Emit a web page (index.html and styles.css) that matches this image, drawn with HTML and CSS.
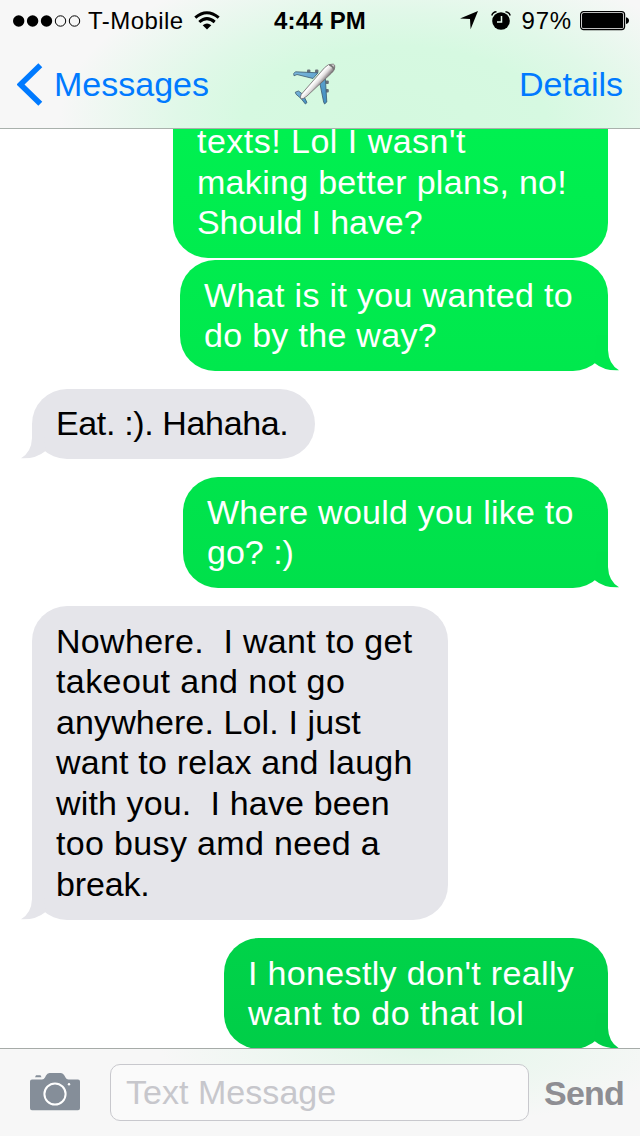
FILE: index.html
```html
<!DOCTYPE html>
<html lang="en">
<head>
<meta charset="utf-8">
<title>Messages</title>
<link rel="stylesheet" href="styles.css">
</head>
<body>
<div class="screen">
  <header class="top">
    <div class="status">
      <div class="status-left">
        <svg class="signal" width="68" height="12" viewBox="0 0 68 12"><g fill="#000"><circle cx="5.7" cy="6" r="5.7"/><circle cx="19.6" cy="6" r="5.7"/><circle cx="33.5" cy="6" r="5.7"/></g><g fill="none" stroke="#000"><circle cx="47.5" cy="6" r="5.2"/><circle cx="61.5" cy="6" r="5.2"/></g></svg>
        <span class="carrier">T-Mobile</span>
        <svg class="wifi" width="26" height="19" viewBox="0 0 26 19"><g fill="none" stroke="#000" stroke-width="3"><path d="M1.3 6.7Q12.8-3.3 24.7 6.7"/><path d="M5.3 11Q12.8 4.3 20.7 11"/></g><path d="M8.7 14.2Q13 10.6 17.3 14.2L13 18.5Z"/></svg>
      </div>
      <span class="clock">4:44 PM</span>
      <div class="status-right">
        <svg class="location" width="18" height="19" viewBox="0 0 18 19"><path d="M18 0L10.6 18.3L10 8L0 7.5Z"/></svg>
        <svg class="alarm" width="20" height="19" viewBox="0 0 20 19"><circle cx="10" cy="10" r="8.8"/><path d="M.8 4.5Q1.8 1 5.5.8M14.5.8Q18.2 1 19.2 4.5" fill="none" stroke="#000" stroke-width="1.5"/><path d="M10.5 5V11H6" fill="none" stroke="#e7f9ed" stroke-width="1.5"/></svg>
        <span class="percent">97%</span>
        <svg class="battery" width="50" height="20" viewBox="0 0 50 20"><rect x=".6" y=".6" width="44" height="18" rx="3" fill="#fff" stroke="#000" stroke-width="1.2"/><rect x="2" y="2" width="41.2" height="15.2" rx="1.5"/><path d="M46 6.2Q49 6.8 49 9.6T46 13Z"/></svg>
      </div>
    </div>
    <nav class="nav">
      <a class="back"><svg width="26" height="43" viewBox="0 0 26 43"><path d="M23.3 2.2L3.5 21.5L23.3 40.8" fill="none" stroke="#007aff" stroke-width="5.6"/></svg><span>Messages</span></a>
      <svg class="plane" width="44" height="44" viewBox="0 0 44 44">
        <defs><linearGradient id="body" gradientUnits="userSpaceOnUse" x1="20" y1="15" x2="28" y2="22"><stop offset="0" stop-color="#d5d2d3"/><stop offset=".3" stop-color="#fff"/><stop offset=".6" stop-color="#e0dcdd"/><stop offset="1" stop-color="#777073"/></linearGradient><linearGradient id="wing" x1="0" y1="0" x2="1" y2="1"><stop offset="0" stop-color="#7cb8dc"/><stop offset="1" stop-color="#3f8cc0"/></linearGradient></defs>
        <g fill="#687079"><rect x="14" y="6.4" width="3.4" height="3.5" rx="1"/><rect x="22" y="6.4" width="3.4" height="3.5" rx="1"/><rect x="32.5" y="17.6" width="3.3" height="3.5" rx="1"/><rect x="32.5" y="26" width="3.3" height="3.5" rx="1"/></g>
        <g stroke="#3c5a70" stroke-width=".8"><path fill="url(#wing)" d="M.7 10.6L2.4 8.8L25 9.8L20 15.5L4 11.5L1 12.8ZM27 21L32.4 16L33.8 39L31.6 41L30.6 39Z"/><path fill="url(#wing)" d="M2.3 29.2L5.5 28L10 31.5L14 39.5L12.4 41L8 35.5L3 31.2Z"/></g>
        <path fill="url(#body)" stroke="#706b6d" stroke-width=".8" d="M8 35.8Q6.8 34.5 8.2 31.4L31.5 4.7Q35 .5 40.3 1.1Q42.4 1.7 41.7 5Q41 8 38.6 10L14 33Q10 36.5 8 35.8Z"/>
        <path d="M36.2 1.8Q40 3 41 6.7" fill="none" stroke="#777" stroke-width="1.5"/>
      </svg>
      <a class="details">Details</a>
    </nav>
  </header>
  <main class="thread">
    <div class="bubble sent first"><span class="l1">texts! Lol I wasn't</span><span class="l2">making better plans, no!</span><span class="l3">Should I have?</span></div>
    <div class="bubble sent second"><span class="l4">What is it you wanted to</span><span class="l5">do by the way?</span><svg class="tail" viewBox="0 0 42 36" width="42" height="36"><path d="M20 0H31V15Q31.5 29 42 35.3Q27 36 17.5 28Z"/></svg></div>
    <div class="bubble received eat"><span class="l6">Eat. :). Hahaha.</span><svg class="tail" viewBox="0 0 42 36" width="42" height="36"><path d="M20 0H31V15Q31.5 29 42 35.3Q27 36 17.5 28Z"/></svg></div>
    <div class="bubble sent where"><span class="l7">Where would you like to</span><span class="l8">go? :)</span><svg class="tail" viewBox="0 0 42 36" width="42" height="36"><path d="M20 0H31V15Q31.5 29 42 35.3Q27 36 17.5 28Z"/></svg></div>
    <div class="bubble received nowhere"><span class="l9">Nowhere.&nbsp; I want to get</span><span class="l10">takeout and not go</span><span class="l11">anywhere. Lol. I just</span><span class="l12">want to relax and laugh</span><span class="l13">with you.&nbsp; I have been</span><span class="l14">too busy amd need a</span><span class="l15">break.</span><svg class="tail" viewBox="0 0 42 36" width="42" height="36"><path d="M20 0H31V15Q31.5 29 42 35.3Q27 36 17.5 28Z"/></svg></div>
    <div class="bubble sent honestly"><span class="l16">I honestly don't really</span><span class="l17">want to do that lol</span><svg class="tail" viewBox="0 0 42 36" width="42" height="36"><path d="M20 0H31V15Q31.5 29 42 35.3Q27 36 17.5 28Z"/></svg></div>
  </main>
  <footer class="composer">
    <svg class="camera" width="50" height="38" viewBox="0 0 50 38"><path fill="#858e99" d="M2 6.5H12Q14 6.5 15 4.5L16 2.5Q17.2 0 19.5 0H31Q33.2 0 34.4 2.5L35.5 4.5Q36.5 6.5 38.5 6.5H48Q50 6.5 50 8.5V35.3Q50 37.3 48 37.3H2Q0 37.3 0 35.3V8.5Q0 6.500 2 6.5ZM6 2.300H10.5L11.5 4.300H5Z"/><circle cx="25" cy="21" r="10.6" fill="none" stroke="#fff" stroke-width="2"/><circle cx="39" cy="11.3" r="1.200" fill="#fff"/></svg>
    <div class="field">Text Message</div>
    <span class="send">Send</span>
  </footer>
</div>
</body>
</html>
```
FILE: styles.css
```css
* { box-sizing: border-box; }
body { margin: 0; font-family: "Liberation Sans", Arial, sans-serif; }
svg { display: block; flex: none; }
.screen { width: 640px; height: 1136px; display: flex; flex-direction: column; overflow: hidden; background: #fff; }
.top { height: 129px; flex: none; border-bottom: 1px solid #a9b1ac; background: radial-gradient(ellipse 335px 165px at 395px 120px, #d4f9df 0%, #d6f9e1 45%, #e0f8e8 65%, rgba(247,247,247,0) 100%), #f7f7f7; }
.status { height: 42px; display: grid; grid-template-columns: 1fr auto 1fr; align-items: center; font-size: 24px; }
.status-left, .status-right { display: flex; align-items: center; }
.status-left { padding-left: 13px; }
.carrier { margin-left: 7px; letter-spacing: .45px; }
.wifi { margin-left: 10px; margin-top: -1px; }
.clock { font-weight: bold; font-size: 24px; letter-spacing: .2px; }
.status-right { justify-content: flex-end; padding-right: 10px; }
.alarm { margin-left: 13px; }
.location, .alarm, .battery { margin-top: -1px; }
.percent { margin-left: 11px; letter-spacing: .8px; }
.battery { margin-left: 8px; }
.nav { height: 86px; display: grid; grid-template-columns: 1fr auto 1fr; align-items: center; color: #007aff; font-size: 34px; }
.back { display: flex; align-items: center; padding-left: 17px; }
.back span { margin-left: 11px; }
.details { justify-self: end; padding-right: 17px; }
.plane { margin-left: -10px; }
.back, .details { position: relative; top: -1px; }
.thread { height: 919px; flex: none; overflow: hidden; display: flex; flex-direction: column; align-items: flex-start; padding: 0 32px; }
.bubble { position: relative; flex: none; border-radius: 35px; padding: 14.6px 24px 0; font-size: 34px; line-height: 40.5px; margin-bottom: 18px; }
.bubble span { display: block; white-space: pre; width: max-content; }
.sent { align-self: flex-end; color: #fff; fill: var(--to); background: linear-gradient(var(--from), var(--to)); }
.received { background: #e5e5ea; color: #000; fill: #e5e5ea; }
.tail { position: absolute; right: -11px; bottom: 0; }
.received .tail { right: auto; left: -11px; transform: scaleX(-1); }
.first { width: 435px; height: 129px; border-radius: 0 0 35px 35px; padding-top: 0; margin-bottom: 2px; --from: #00f050; --to: #00ec4e; }
.first .l1 { margin-top: -8px; }
.second { width: 428px; height: 111px; --from: #00ec4e; --to: #00e84d; }
.eat { width: 283px; height: 70px; padding-top: 14px; }
.where { width: 425px; height: 111px; --from: #00e44c; --to: #00e04b; }
.nowhere { width: 416px; height: 314px; }
.honestly { width: 384px; height: 111px; --from: #00d349; --to: #00ce48; }
/* Per-line tracking */
.l1 { letter-spacing: .48px; }
.l2 { letter-spacing: .3px; }
.l3 { letter-spacing: -.1px; }
.l4 { letter-spacing: .34px; }
.l5 { letter-spacing: .3px; }
.l6 { letter-spacing: -.36px; }
.l7 { letter-spacing: .25px; }
.l9 { letter-spacing: .3px; }
.l10 { letter-spacing: .42px; }
.l11 { letter-spacing: .12px; }
.l12 { letter-spacing: .22px; }
.l13 { letter-spacing: .14px; }
.l14 { letter-spacing: .34px; }
.l15 { letter-spacing: -.15px; }
.l16 { letter-spacing: .34px; }
.l17 { letter-spacing: .52px; }
.composer { height: 88px; flex: none; border-top: 1px solid #a6aba8; display: flex; align-items: center; padding: 0 16px 0 30px; background: radial-gradient(ellipse 260px 75px at 420px 0, #e3f6e9, rgba(247,247,247,0)), #f7f7f7; }
.camera { margin-top: -1px; }
.field { width: 419px; flex: none; height: 57px; margin-left: 30px; padding-left: 15px; border: 1px solid #c8c8cd; border-radius: 10px; background: #fafafa; color: #c7c7cc; font-size: 34px; line-height: 55px; letter-spacing: .04px; }
.send { margin-left: 15px; margin-top: 2px; font-size: 34px; font-weight: bold; letter-spacing: -.8px; color: #8e8e93; }
```
